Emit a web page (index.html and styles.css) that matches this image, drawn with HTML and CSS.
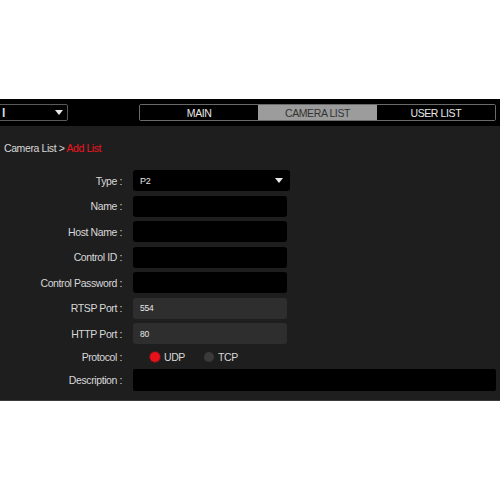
FILE: index.html
```html
<!DOCTYPE html>
<html>
<head>
<meta charset="utf-8">
<link rel="stylesheet" href="styles.css">
</head>
<body>
<div class="top-space"></div>
<div class="app">
  <div class="topbar">
    <div class="mode-select">
      <span class="mode-text">l</span>
      <span class="arrow"></span>
    </div>
    <div class="tabs">
      <div class="tab">MAIN</div>
      <div class="tab active">CAMERA LIST</div>
      <div class="tab">USER LIST</div>
    </div>
  </div>
  <div class="content">
    <div class="crumb">Camera List &gt; <span class="crumb-red">Add List</span></div>
    <div class="form">
      <div class="label">Type :</div>
      <div class="field select"><span class="val">P2</span><span class="arrow"></span></div>

      <div class="label">Name :</div>
      <div class="field"></div>

      <div class="label">Host Name :</div>
      <div class="field"></div>

      <div class="label">Control ID :</div>
      <div class="field"></div>

      <div class="label">Control Password :</div>
      <div class="field"></div>

      <div class="label">RTSP Port :</div>
      <div class="field grey"><span class="val small">554</span></div>

      <div class="label">HTTP Port :</div>
      <div class="field grey"><span class="val small">80</span></div>

      <div class="label proto">Protocol :</div>
      <div class="radios">
        <span class="radio on"></span><span class="rlabel">UDP</span>
        <span class="radio"></span><span class="rlabel">TCP</span>
      </div>

      <div class="label">Description :</div>
      <div class="field wide"></div>
    </div>
  </div>
</div>
</body>
</html>
```
FILE: styles.css
```css
html, body {
  margin: 0;
  padding: 0;
  background: #ffffff;
  font-family: "Liberation Sans", Arial, sans-serif;
}
.top-space {
  height: 99px;
}
.app {
  height: 301px;
  background: #1e1e1f;
  border-bottom: 1px solid #3a3a3a;
  overflow: hidden;
}
.topbar {
  height: 27px;
  background: #000;
  display: flex;
  align-items: center;
  padding-right: 4px;
  box-sizing: border-box;
}
.mode-select {
  margin-left: -4px;
  width: 72px;
  height: 17px;
  box-sizing: border-box;
  border: 1px solid #5a5a5a;
  border-radius: 2px;
  display: flex;
  align-items: center;
  justify-content: space-between;
  padding: 0 4px 0 5px;
  color: #ddd;
  font-size: 12px;
  font-weight: bold;
}
.arrow {
  width: 0;
  height: 0;
  border-left: 4px solid transparent;
  border-right: 4px solid transparent;
  border-top: 5px solid #e8e8e8;
}
.tabs {
  margin-left: auto;
  width: 357px;
  height: 17px;
  display: flex;
  border: 1px solid #6a6a6a;
  border-radius: 2px;
  box-sizing: border-box;
}
.tab {
  flex: 1;
  display: flex;
  align-items: center;
  justify-content: center;
  color: #e8e8e8;
  font-size: 10.5px;
  letter-spacing: -0.4px;
  background: #000;
}
.tab.active {
  background: #9c9c9c;
  color: #333;
}
.content {
  padding: 16px 0 0 0;
}
.crumb {
  padding-left: 4px;
  font-size: 10.5px;
  letter-spacing: -0.4px;
  color: #d8d8d8;
  height: 13px;
  line-height: 13px;
}
.crumb-red {
  color: #f0141e;
}
.form {
  margin-top: 15px;
  display: grid;
  grid-template-columns: 122px auto;
  column-gap: 11px;
  row-gap: 4.5px;
  grid-template-rows: repeat(7, 21px) 16px 22px;
}
.label {
  text-align: right;
  font-size: 10.5px;
  letter-spacing: -0.4px;
  color: #d8d8d8;
  display: flex;
  align-items: center;
  justify-content: flex-end;
}
.field {
  width: 154px;
  height: 21px;
  background: #000;
  border-radius: 3px;
  display: flex;
  align-items: center;
  padding: 0 7px;
  box-sizing: border-box;
}
.field.select {
  width: 157px;
  justify-content: space-between;
}
.field.grey {
  background: #2e2e2f;
}
.field.wide {
  width: 363px;
  height: 22px;
  border-radius: 2px;
}
.val {
  color: #e6e6e6;
  font-size: 9px;
  letter-spacing: -0.2px;
}
.val.small {
  font-size: 8.5px;
}
.radios {
  display: flex;
  align-items: center;
  font-size: 10.5px;
  letter-spacing: -0.4px;
  color: #d8d8d8;
  padding-left: 17px;
}
.radio {
  width: 10px;
  height: 10px;
  border-radius: 50%;
  background: #3a3a3b;
  margin-right: 4px;
}
.radio.on {
  background: #e8101a;
  box-shadow: 0 0 0 1px #5a1a1c;
}
.rlabel {
  margin-right: 19px;
}
```
